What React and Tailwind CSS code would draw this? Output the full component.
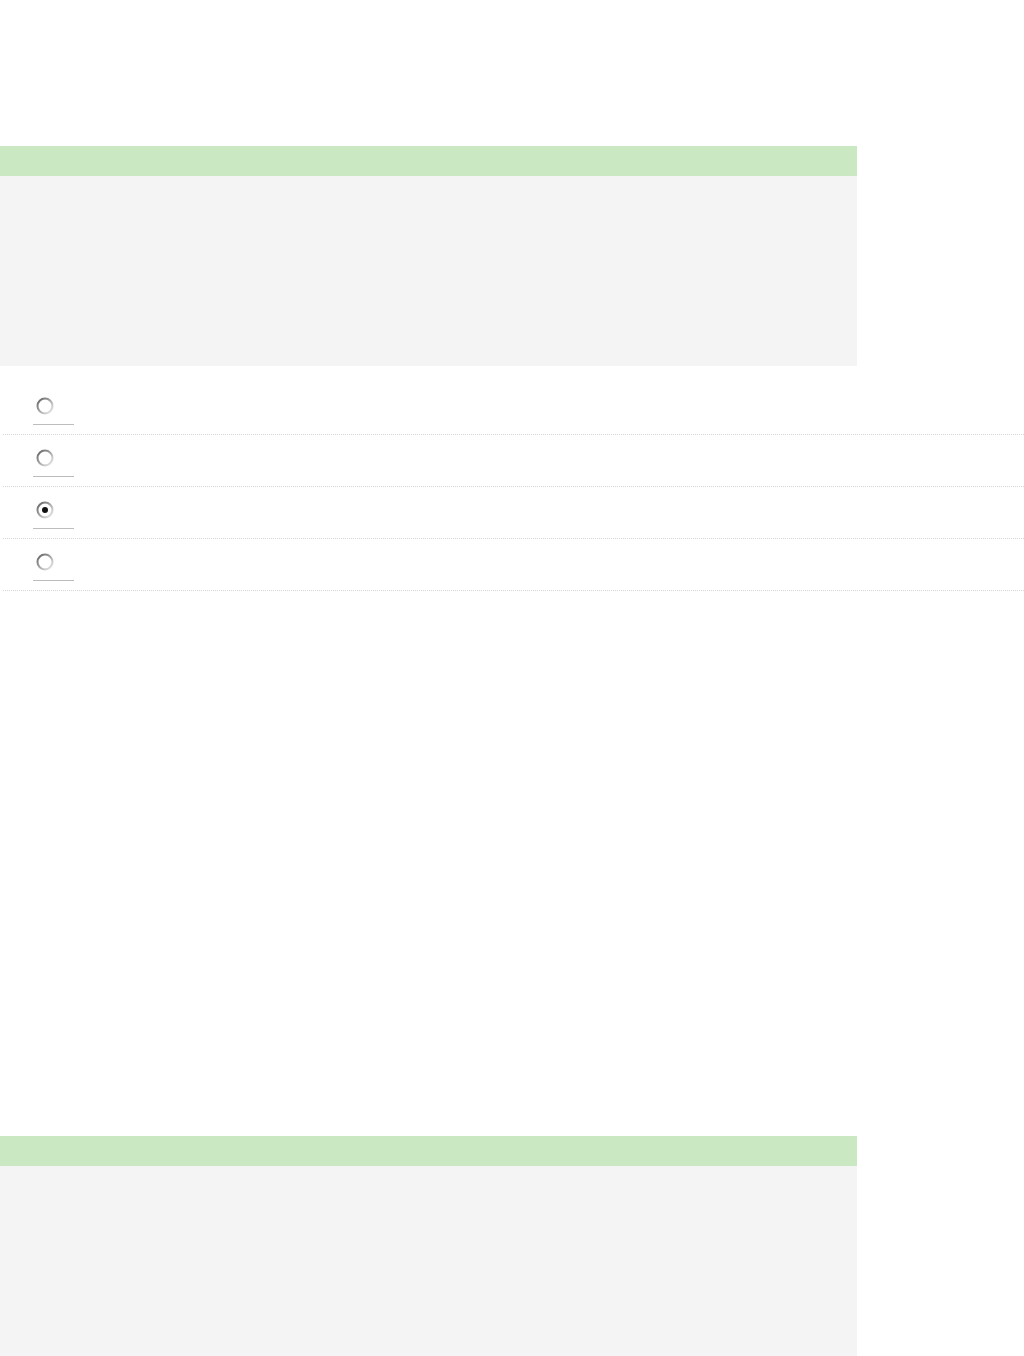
const Radio = ({ checked }) => (
  <svg width="18" height="18" viewBox="0 0 18 18" className="block">
    <defs>
      <linearGradient id={checked ? "rg-on" : "rg-off"} x1="0" y1="0" x2="1" y2="1">
        <stop offset="0" stopColor="#5f5f5f" />
        <stop offset="0.5" stopColor="#a8a8a8" />
        <stop offset="1" stopColor="#eeeeee" />
      </linearGradient>
    </defs>
    <circle cx="9" cy="9" r="7.5" fill="#fff" stroke={`url(#${checked ? "rg-on" : "rg-off"})`} strokeWidth="2" />
    {checked && <circle cx="9" cy="9" r="3" fill="#111" />}
  </svg>
);

const Panel = () => (
  <div className="w-[857px]">
    <div className="h-[30px] bg-[#cae9c2]" />
    <div className="h-[190px] bg-[#f4f4f4]" />
  </div>
);

const options = [false, false, true, false];

export default function App() {
  return (
    <div className="min-h-[1356px] bg-white pt-[146px] font-['Liberation_Sans',sans-serif]">
      <Panel />
      <ul className="mt-[17px] w-[1024px]">
        {options.map((checked, i) => (
          <li key={i} className="ml-[3px] h-[52px] border-b border-dotted border-[#d6d6d6] pl-[30px] pt-[14px]">
            <div className="ml-[3px]">
              <Radio checked={checked} />
            </div>
            <div className="mt-[9px] w-[41px] border-b border-[#bdbdbd]" />
          </li>
        ))}
      </ul>
      <div className="mt-[545px]">
        <Panel />
      </div>
    </div>
  );
}
